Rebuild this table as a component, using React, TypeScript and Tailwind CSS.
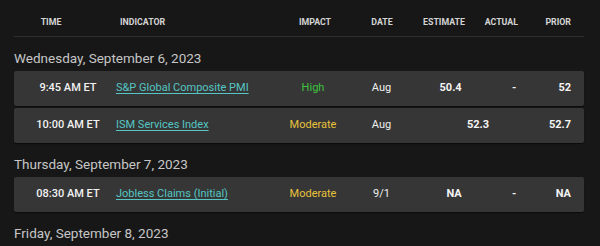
type Impact = 'High' | 'Moderate';

type CalendarRow = {
  time: string;
  indicator: string;
  impact: Impact;
  period: string;
  values: string[];
};

type CalendarDay = { label: string; rows: CalendarRow[] };

const days: CalendarDay[] = [
  {
    label: 'Wednesday, September 6, 2023',
    rows: [
      { time: '9:45 AM ET', indicator: 'S&P Global Composite PMI', impact: 'High', period: 'Aug', values: ['50.4', '-', '52'] },
      { time: '10:00 AM ET', indicator: 'ISM Services Index', impact: 'Moderate', period: 'Aug', values: ['52.3', '52.7'] },
    ],
  },
  {
    label: 'Thursday, September 7, 2023',
    rows: [
      { time: '08:30 AM ET', indicator: 'Jobless Claims (Initial)', impact: 'Moderate', period: '9/1', values: ['NA', '-', 'NA'] },
    ],
  },
  { label: 'Friday, September 8, 2023', rows: [] },
];

const impactColor: Record<Impact, string> = {
  High: 'text-[#3cc43c]',
  Moderate: 'text-[#e8c23c]',
};

const HeaderRow = () => (
  <div className="flex border-b border-[#2e2e2e] pt-[15px] pb-[7px] text-[8.8px] font-bold uppercase leading-[14px] text-[#d4d4d4]">
    <div className="w-[74px] text-center">Time</div>
    <div className="w-[182px] pl-[32px]">Indicator</div>
    <div className="w-[90px] text-center">Impact</div>
    <div className="w-[44px] text-center">Date</div>
    <div className="ml-[8px] flex flex-1 pr-[13px]">
      {['Estimate', 'Actual', 'Prior'].map((col) => <div key={col} className="flex-1 text-right">{col}</div>)}
    </div>
  </div>
);

const EventRow = ({ row }: { row: CalendarRow }) => (
  <div className="flex h-[35px] items-center rounded-[2px] bg-[#363636] text-[11px] shadow-[0_1px_1px_rgba(0,0,0,0.5)]">
    <div className="w-[102px] pl-[6px] text-center font-medium text-[#f2f2f2]">{row.time}</div>
    <div className="w-[154px]">
      <a href="#" className="text-[#55c6c4] underline underline-offset-2">{row.indicator}</a>
    </div>
    <div className={`w-[86px] text-center ${impactColor[row.impact]}`}>{row.impact}</div>
    <div className="w-[51px] text-center text-[#eeeeee]">{row.period}</div>
    <div className="flex flex-1 pr-[13px] font-bold text-[#f4f4f4]">
      {row.values.map((v, i) => <div key={i} className="flex-1 text-right">{v}</div>)}
    </div>
  </div>
);

export default function App() {
  return (
    <div className="h-[246px] w-[600px] overflow-hidden bg-[#171717] pl-[14px] pr-[16px]" style={{ fontFamily: 'Roboto, "Liberation Sans", sans-serif' }}>
      <HeaderRow />
      {days.map((day) => (
        <section key={day.label}>
          <h2 className="pt-[11px] pb-[3px] text-[13.5px] leading-[20px] text-[#c6c6c6]">{day.label}</h2>
          <div className="flex flex-col gap-[2px]">
            {day.rows.map((row) => <EventRow key={row.indicator} row={row} />)}
          </div>
        </section>
      ))}
    </div>
  );
}
